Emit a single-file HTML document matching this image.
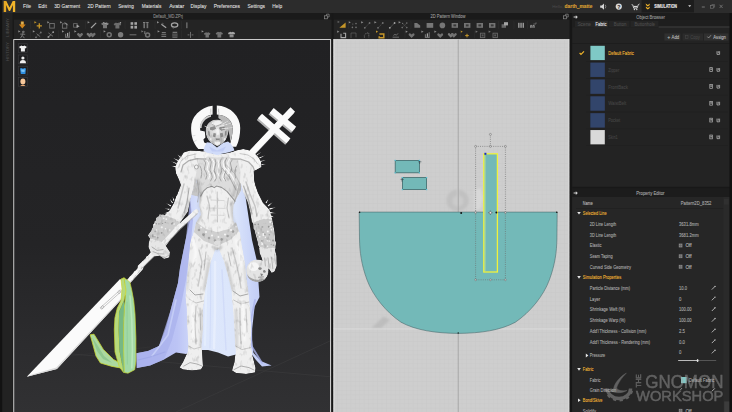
<!DOCTYPE html>
<html lang="en"><head><meta charset="utf-8"><title>Marvelous Designer - Default_MD.ZPrj</title>
<style>
html,body{margin:0;padding:0;background:#1b1b1b;overflow:hidden}
body{width:732px;height:412px;position:relative;font-family:'Liberation Sans','DejaVu Sans',sans-serif}
svg{position:absolute;left:0;top:0;display:block}
svg text{font-family:'Liberation Sans','DejaVu Sans',sans-serif;white-space:pre}
</style></head><body>
<svg width="732" height="412" viewBox="0 0 732 412">
<rect x="0" y="0" width="732" height="412" fill="#1b1b1b" />
<rect x="0" y="0" width="732" height="13" fill="#2c2c2c" />
<rect x="0" y="13" width="13.5" height="399" fill="#222222" />
<rect x="0" y="0" width="2.2" height="412" fill="#121212" />
<rect x="12.6" y="13" width="1" height="399" fill="#181818" />
<rect x="14" y="13" width="558" height="6.6" fill="#1a1a1a" />
<rect x="14" y="19.6" width="318" height="19.4" fill="#242424" />
<rect x="333.5" y="19.6" width="236.5" height="19.4" fill="#242424" />
<rect x="331.5" y="13" width="2" height="399" fill="#181818" />
<path d="M3.8 12 L3.8 0.9 L6.3 0.9 L9.5 7.4 L12.7 0.9 L15.2 0.9 L15.2 12 L12.9 12 L12.9 5 L10.1 10.9 L8.9 10.9 L6.1 5 L6.1 12 Z" fill="#f2b52a"/>
<path d="M3.8 12 L3.8 0.9 L6.1 0.9 L6.1 12Z" fill="#d99a1c" opacity=".5"/>
<text x="23" y="7.9" font-size="5.5" fill="#dedede" font-weight="normal" text-anchor="start" textLength="8.2" lengthAdjust="spacingAndGlyphs" stroke="#dedede" stroke-width=".12">File</text>
<text x="38.2" y="7.9" font-size="5.5" fill="#dedede" font-weight="normal" text-anchor="start" textLength="8.6" lengthAdjust="spacingAndGlyphs" stroke="#dedede" stroke-width=".12">Edit</text>
<text x="54.2" y="7.9" font-size="5.5" fill="#dedede" font-weight="normal" text-anchor="start" textLength="25.8" lengthAdjust="spacingAndGlyphs" stroke="#dedede" stroke-width=".12">3D Garment</text>
<text x="87.5" y="7.9" font-size="5.5" fill="#dedede" font-weight="normal" text-anchor="start" textLength="23.3" lengthAdjust="spacingAndGlyphs" stroke="#dedede" stroke-width=".12">2D Pattern</text>
<text x="118.2" y="7.9" font-size="5.5" fill="#dedede" font-weight="normal" text-anchor="start" textLength="15.6" lengthAdjust="spacingAndGlyphs" stroke="#dedede" stroke-width=".12">Sewing</text>
<text x="141.8" y="7.9" font-size="5.5" fill="#dedede" font-weight="normal" text-anchor="start" textLength="19.5" lengthAdjust="spacingAndGlyphs" stroke="#dedede" stroke-width=".12">Materials</text>
<text x="169.2" y="7.9" font-size="5.5" fill="#dedede" font-weight="normal" text-anchor="start" textLength="15.0" lengthAdjust="spacingAndGlyphs" stroke="#dedede" stroke-width=".12">Avatar</text>
<text x="190.5" y="7.9" font-size="5.5" fill="#dedede" font-weight="normal" text-anchor="start" textLength="15.8" lengthAdjust="spacingAndGlyphs" stroke="#dedede" stroke-width=".12">Display</text>
<text x="213.7" y="7.9" font-size="5.5" fill="#dedede" font-weight="normal" text-anchor="start" textLength="26.3" lengthAdjust="spacingAndGlyphs" stroke="#dedede" stroke-width=".12">Preferences</text>
<text x="247.5" y="7.9" font-size="5.5" fill="#dedede" font-weight="normal" text-anchor="start" textLength="17.5" lengthAdjust="spacingAndGlyphs" stroke="#dedede" stroke-width=".12">Settings</text>
<text x="272.3" y="7.9" font-size="5.5" fill="#dedede" font-weight="normal" text-anchor="start" textLength="10.0" lengthAdjust="spacingAndGlyphs" stroke="#dedede" stroke-width=".12">Help</text>
<text transform="translate(8.6,37) rotate(-90)" font-size="4.2" fill="#4e4e4e" textLength="19" lengthAdjust="spacingAndGlyphs">LIBRARY</text>
<text transform="translate(8.6,61) rotate(-90)" font-size="4.2" fill="#4e4e4e" textLength="19" lengthAdjust="spacingAndGlyphs">HISTORY</text>
<text x="153.2" y="18.4" font-size="5.2" fill="#8c8c8c" font-weight="normal" text-anchor="start" textLength="29.8" lengthAdjust="spacingAndGlyphs"  stroke="#8c8c8c" stroke-width=".1">Default_MD.ZPrj</text>
<text x="430.5" y="18.4" font-size="5.2" fill="#9a9a9a" font-weight="normal" text-anchor="start" textLength="35" lengthAdjust="spacingAndGlyphs"  stroke="#9a9a9a" stroke-width=".1">2D Pattern Window</text>
<g fill="none" stroke="#8a8a8a" stroke-width=".7"><rect x="324.5" y="15.799999999999999" width="3" height="3"/><path d="M326.5 15.799999999999999 V14.2 H329.09999999999997 V17.0 H327.5"/></g>
<g fill="none" stroke="#8a8a8a" stroke-width=".7"><rect x="563.5999999999999" y="15.799999999999999" width="3" height="3"/><path d="M565.5999999999999 15.799999999999999 V14.2 H568.1999999999999 V17.0 H566.5999999999999"/></g>
<g fill="none" stroke="#8a8a8a" stroke-width=".7"><rect x="723.4" y="16.0" width="3" height="3"/><path d="M725.4 16.0 V14.400000000000002 H728.0 V17.200000000000003 H726.4"/></g>
<g fill="none" stroke="#8a8a8a" stroke-width=".7"><rect x="723.4" y="192.0" width="3" height="3"/><path d="M725.4 192.0 V190.4 H728.0 V193.2 H726.4"/></g>
<g filter="url(#soft3)" opacity=".82">
<path d="M20.8 21.4 h3 v3.2 h1.9 l-3.4 4 l-3.4 -4 h1.9z" fill="#f59a1a"/><path d="M21.2 21.8 h2.2 v2.4 h-2.2z" fill="#ffd46a"/>
<path d="M34.4 21.2 l2.2 1.1 l-2.2 1.1z" fill="#eab02a"/>
<path d="M36.699999999999996 25.8H41.9M39.3 23.2V28.400000000000002" stroke="#eab02a" stroke-width="1.3" fill="none"/>
<path d="M47.3 21.2 l2.2 1.1 l-2.2 1.1z" fill="#a8a8a8"/>
<rect x="49.7" y="23.5" width="4.6" height="4.6" fill="none" stroke="#838383" stroke-width=".9"/>
<path d="M60.099999999999994 21.2 l2.2 1.1 l-2.2 1.1z" fill="#a8a8a8"/>
<rect x="62.39999999999999" y="23.8" width="4.4" height="4.4" fill="none" stroke="#838383" stroke-width=".9"/>
<path d="M64.8 22.400000000000002L67.60000000000001 25.2" stroke="#c2c2c2" stroke-width="0.9" fill="none"/>
<rect x="73.60000000000001" y="23.599999999999998" width="3.6" height="3.6" fill="none" stroke="#777" stroke-width=".9"/>
<path d="M76.6 24.599999999999998 l3 1.6 l-3 1.8z" fill="#c2c2c2"/>
<path d="M87.6 21.2 l2.2 1.1 l-2.2 1.1z" fill="#a8a8a8"/>
<path d="M91.0 28.0L96.19999999999999 22.799999999999997" stroke="#c2c2c2" stroke-width="1.1" fill="none"/>
<path transform="translate(105,25.2) scale(1.0)" d="M-1.4 -3 L-3.8 -1.6 L-3 0 L-2 -0.5 L-2 3 L2 3 L2 -0.5 L3 0 L3.8 -1.6 L1.4 -3 Q0 -2 -1.4 -3Z" fill="#8a8a8a"/>
<path d="M103 22.599999999999998 l4.6 1.6" stroke="#c2c2c2" stroke-width=".9"/>
<path transform="translate(117.4,25.5) scale(1.0)" d="M-1.4 -3 L-3.8 -1.6 L-3 0 L-2 -0.5 L-2 3 L2 3 L2 -0.5 L3 0 L3.8 -1.6 L1.4 -3 Q0 -2 -1.4 -3Z" fill="#7c7c7c"/>
<circle cx="120.4" cy="22.8" r=".8" fill="#c2c2c2"/>
<g fill="#c2c2c2"><rect x="130.6" y="22.2" width="2.6" height="2.6"/><rect x="134.4" y="22.2" width="2.6" height="2.6"/><rect x="130.6" y="25.8" width="2.6" height="2.8"/><rect x="134.4" y="25.8" width="2.6" height="2.8"/></g>
<g fill="#838383"><rect x="143.4" y="23.2" width="1.6" height="5"/><rect x="146.6" y="23.2" width="1.6" height="5"/></g><path d="M143 22.599999999999998h2.4M146.2 22.599999999999998h2.4" stroke="#c2c2c2" stroke-width=".8"/>
<path d="M157 21.2 l2.2 1.1 l-2.2 1.1z" fill="#a8a8a8"/>
<path d="M161.4 24.2L166.20000000000002 27.8" stroke="#c2c2c2" stroke-width="1.1" fill="none"/>
<path d="M161.6 23.8 q1 -1 2 0" stroke="#838383" fill="none" stroke-width=".8"/>
<ellipse cx="174.6" cy="25.0" rx="3.2" ry="2.1" fill="none" stroke="#c2c2c2" stroke-width="1.2"/><path d="M172 27.2l1.4 1.4" stroke="#838383" stroke-width=".9"/>
<rect x="186.2" y="22.4" width="1.3" height="5.8" fill="#838383"/>
<path d="M18.3 30.299999999999997 l2.2 1.1 l-2.2 1.1z" fill="#a8a8a8"/>
<g stroke="#838383" stroke-width="1" fill="none" stroke-linecap="round"><circle cx="23.200000000000003" cy="31.899999999999995" r=".8" fill="#838383"/><path d="M23.0 33.099999999999994 L22.200000000000003 35.49999999999999 L20.6 37.9 M22.200000000000003 35.49999999999999 L24.200000000000003 37.9 M20.6 34.099999999999994 L24.8 34.3"/></g>
<path d="M32.8 30.299999999999997 l2.2 1.1 l-2.2 1.1z" fill="#a8a8a8"/>
<g fill="#838383"><circle cx="36.0" cy="37.3" r=".9"/><circle cx="40.8" cy="32.5" r=".9"/></g><path d="M36.0 37.3L40.8 32.5" stroke="#838383" stroke-width=".7" stroke-dasharray="1 .8"/>
<path d="M36.6 33.699999999999996l3.6 3" stroke="#838383" stroke-width=".9"/>
<g fill="#c2c2c2"><circle cx="48.4" cy="36.9" r=".9"/><circle cx="53.199999999999996" cy="32.1" r=".9"/></g><path d="M48.4 36.9L53.199999999999996 32.1" stroke="#c2c2c2" stroke-width=".7" stroke-dasharray="1 .8"/>
<path d="M48.4 32.9l4.6 3.4M48.6 36.699999999999996l2.4-2" stroke="#838383" stroke-width=".9"/>
<path d="M62 30.299999999999997 l2.2 1.1 l-2.2 1.1z" fill="#a8a8a8"/>
<path d="M65.6 33.699999999999996 v3.4 h3.8 v-5.4" stroke="#838383" stroke-width="1.1" fill="none"/><rect x="67" y="32.9" width="1.2" height="3.6" fill="#c2c2c2"/>
<path d="M74.4 30.299999999999997 l2.2 1.1 l-2.2 1.1z" fill="#a8a8a8"/>
<path d="M80 37.699999999999996 L77 34.699999999999996 Q77 32.49999999999999 78.8 33.099999999999994 L80 34.3 L81.2 33.099999999999994 Q83 32.49999999999999 83 34.699999999999996Z" fill="#838383"/>
<path d="M89.6 37.5 L86.6 34.5 Q86.6 32.3 88.39999999999999 32.9 L89.6 34.1 L90.8 32.9 Q92.6 32.3 92.6 34.5Z" fill="#8c8c8c"/>
<path d="M92.6 37.5 L89.6 34.5 Q89.6 32.3 91.39999999999999 32.9 L92.6 34.1 L93.8 32.9 Q95.6 32.3 95.6 34.5Z" fill="#838383"/>
<path d="M103.6 30.299999999999997 l2.2 1.1 l-2.2 1.1z" fill="#a8a8a8"/>
<circle cx="109.2" cy="34.8" r="2" fill="none" stroke="#838383" stroke-width="1.5"/>
<circle cx="120.6" cy="34.699999999999996" r="2.7" fill="#8e8e8e"/>
<path d="M129.6 34.8h6.8" stroke="#838383" stroke-width="1"/>
<path d="M141.4 30.299999999999997 l2.2 1.1 l-2.2 1.1z" fill="#888"/>
<circle cx="147.6" cy="35.099999999999994" r="2" fill="none" stroke="#838383" stroke-width="1.5"/>
<rect x="144.2" y="31.099999999999998" width="1.2" height="3" fill="#838383"/>
<path d="M157.6 30.299999999999997 l2.2 1.1 l-2.2 1.1z" fill="#a8a8a8"/>
<path d="M161.4 34.699999999999996h4.8M161.4 36.5h4.8" stroke="#838383" stroke-width="1"/><path d="M161.8 32.699999999999996h4" stroke="#c2c2c2" stroke-width=".8"/>
<path d="M172.2 34.099999999999994h5.4M172.2 35.9h5.4M172.4 37.3h5" stroke="#838383" stroke-width=".9"/><path d="M172.6 32.3h4.6" stroke="#c2c2c2" stroke-width=".8"/>
<path d="M187.6 34.9h1.8M191.6 34.9h1.8M190.5 31.9v6" stroke="#838383" stroke-width=".9"/>
<path d="M201.6 30.299999999999997 l2.2 1.1 l-2.2 1.1z" fill="#a8a8a8"/>
<path transform="translate(207.2,34.9) scale(0.85)" d="M-1.4 -3 L-3.8 -1.6 L-3 0 L-2 -0.5 L-2 3 L2 3 L2 -0.5 L3 0 L3.8 -1.6 L1.4 -3 Q0 -2 -1.4 -3Z" fill="#838383"/>
<path transform="translate(219.3,34.699999999999996) scale(0.95)" d="M-1.4 -3 L-3.8 -1.6 L-3 0 L-2 -0.5 L-2 3 L2 3 L2 -0.5 L3 0 L3.8 -1.6 L1.4 -3 Q0 -2 -1.4 -3Z" fill="#838383"/>
<path transform="translate(231.6,34.5) scale(0.95)" d="M-1.4 -3 L-3.8 -1.6 L-3 0 L-2 -0.5 L-2 3 L2 3 L2 -0.5 L3 0 L3.8 -1.6 L1.4 -3 Q0 -2 -1.4 -3Z" fill="#c2c2c2"/>
<path d="M229.2 34.5h4.8M229.6 36.099999999999994h4" stroke="#555" stroke-width=".6"/>
<rect x="30.2" y="21.2" width="0.6" height="7.6" fill="#333" />
<rect x="85" y="21.2" width="0.6" height="7.6" fill="#333" />
<rect x="124.8" y="21.2" width="0.6" height="7.6" fill="#333" />
<rect x="154.8" y="21.2" width="0.6" height="7.6" fill="#333" />
<rect x="181.4" y="21.2" width="0.6" height="7.6" fill="#333" />
<rect x="30.2" y="30.4" width="0.6" height="7.6" fill="#333" />
<rect x="58" y="30.4" width="0.6" height="7.6" fill="#333" />
<rect x="100" y="30.4" width="0.6" height="7.6" fill="#333" />
<rect x="154.8" y="30.4" width="0.6" height="7.6" fill="#333" />
<rect x="181.4" y="30.4" width="0.6" height="7.6" fill="#333" />
<rect x="198.6" y="30.4" width="0.6" height="7.6" fill="#333" />
<path d="M339.4 27.8 L345.6 27.8 L345.6 22.4Z" fill="#eab02a"/>
<path d="M337.6 20.8 l2.2 1.1 l-2.2 1.1z" fill="#777"/>
<path d="M348.6 21.2 l2.2 1.1 l-2.2 1.1z" fill="#a8a8a8"/>
<g fill="#838383"><circle cx="352.4" cy="27.4" r=".8"/><circle cx="356" cy="27.4" r=".8"/><circle cx="356" cy="23.599999999999998" r=".8"/><circle cx="352.8" cy="24.0" r=".6"/></g>
<path d="M361.2 21.2 l2.2 1.1 l-2.2 1.1z" fill="#a8a8a8"/>
<g fill="#838383"><circle cx="364.8" cy="27.799999999999997" r=".9"/><circle cx="369.59999999999997" cy="23.0" r=".9"/></g><path d="M364.8 27.799999999999997L369.59999999999997 23.0" stroke="#838383" stroke-width=".7" stroke-dasharray="1 .8"/>
<path d="M374.4 21.2 l2.2 1.1 l-2.2 1.1z" fill="#a8a8a8"/>
<g fill="#838383"><circle cx="378.0" cy="27.799999999999997" r=".9"/><circle cx="382.79999999999995" cy="23.0" r=".9"/></g><path d="M378.0 27.799999999999997L382.79999999999995 23.0" stroke="#838383" stroke-width=".7" stroke-dasharray="1 .8"/>
<g fill="#c2c2c2"><circle cx="389.8" cy="27.799999999999997" r=".9"/><circle cx="394.59999999999997" cy="23.0" r=".9"/></g><path d="M389.8 27.799999999999997L394.59999999999997 23.0" stroke="#c2c2c2" stroke-width=".7" stroke-dasharray="1 .8"/>
<path d="M398.6 21.2 l2.2 1.1 l-2.2 1.1z" fill="#a8a8a8"/>
<g fill="#838383"><circle cx="402.2" cy="27.599999999999998" r=".8"/><circle cx="406.8" cy="27.599999999999998" r=".8"/><circle cx="406.8" cy="23.0" r=".8"/><circle cx="402.6" cy="23.4" r=".6"/></g><path d="M402.4 23.2l4.2 4.2M406.6 23.2l-4.2 4.2" stroke="#838383" stroke-width=".6" stroke-dasharray="1 .7"/>
<path d="M414.4 27.8 v-4.8 h2.6 l3.2 2.4 v2.4z" fill="#8a8a8a"/>
<rect x="426.6" y="23.0" width="6.6" height="4.8" fill="#8a8a8a"/>
<circle cx="442.4" cy="25.4" r="2.8" fill="#8a8a8a"/>
<rect x="451.6" y="23.0" width="6.4" height="4.8" fill="#868686"/><rect x="453.40000000000003" y="24.4" width="2.8" height="2" fill="#3c3c3c"/>
<rect x="464.0" y="23.0" width="6.4" height="4.8" fill="#868686"/><rect x="465.8" y="24.4" width="2.8" height="2" fill="#3c3c3c"/>
<rect x="476.6" y="23.0" width="6.4" height="4.8" fill="#868686"/><rect x="478.40000000000003" y="24.4" width="2.8" height="2" fill="#3c3c3c"/>
<rect x="489.0" y="23.0" width="6.4" height="4.8" fill="#868686"/><rect x="490.8" y="24.4" width="2.8" height="2" fill="#3c3c3c"/>
<rect x="501.6" y="24.2" width="4.4" height="3.6" fill="#777"/><rect x="504" y="22.2" width="4" height="3.2" fill="#c2c2c2"/>
<g fill="#c2c2c2"><rect x="518.2" y="22.8" width="1.3" height="5"/><rect x="520.4" y="22.8" width="1.3" height="5"/><rect x="522.6" y="22.8" width="1.3" height="5"/></g>
<path d="M530.6 27.8v-2.4h1.2v2.4M533 27.8v-2.4h1.2v2.4" stroke="#c2c2c2" stroke-width=".8" fill="none"/><path d="M533.4 24.0h2.6v-1.6" stroke="#838383" stroke-width=".8" fill="none"/>
<path d="M337.2 30.6 l2.2 1.1 l-2.2 1.1z" fill="#a8a8a8"/>
<path d="M341 33.800000000000004v3.8h4.6v-4.4h-2.4" stroke="#c2c2c2" stroke-width="1.1" fill="none"/>
<path d="M351 37.6v-4.6h5v4.6" stroke="#838383" stroke-width=".9" fill="none" stroke-dasharray="1.2 .8"/>
<path d="M364.4 37.6v-2.4l2-2.2h2.4v4.6" stroke="#838383" stroke-width=".9" fill="none" stroke-dasharray="1.2 .8"/>
<path d="M376 30.6 l2.2 1.1 l-2.2 1.1z" fill="#eab02a"/>
<path d="M379.4 34.0h4.4v3.8h-4.6v-1.6" stroke="#eab02a" stroke-width="1.5" fill="none"/>
<path d="M392.6 37.2h6.4M393.4 35.4l1.6-1l1.4 .8l1.6-1.8" stroke="#838383" stroke-width=".9" fill="none"/>
<path d="M405.6 30.6 l2.2 1.1 l-2.2 1.1z" fill="#a8a8a8"/>
<path d="M411.6 38.0 L408.6 35.0 Q408.6 32.8 410.40000000000003 33.4 L411.6 34.6 L412.8 33.4 Q414.6 32.8 414.6 35.0Z" fill="#838383"/>
<path d="M421.4 30.6 l2.2 1.1 l-2.2 1.1z" fill="#a8a8a8"/>
<path d="M425.4 34.2 v3.2 h3.8 v-5.2" stroke="#838383" stroke-width="1.1" fill="none"/><rect x="426.8" y="33.4" width="1.2" height="3.4" fill="#c2c2c2"/>
<path d="M434.4 30.6 l2.2 1.1 l-2.2 1.1z" fill="#a8a8a8"/>
<path d="M440.2 38.0 L437.2 35.0 Q437.2 32.8 439.0 33.4 L440.2 34.6 L441.4 33.4 Q443.2 32.8 443.2 35.0Z" fill="#838383"/>
<path d="M450.8 37.800000000000004 L447.8 34.800000000000004 Q447.8 32.6 449.6 33.2 L450.8 34.400000000000006 L452.0 33.2 Q453.8 32.6 453.8 34.800000000000004Z" fill="#8c8c8c"/>
<path d="M453.8 37.800000000000004 L450.8 34.800000000000004 Q450.8 32.6 452.6 33.2 L453.8 34.400000000000006 L455.0 33.2 Q456.8 32.6 456.8 34.800000000000004Z" fill="#838383"/>
<path d="M460.6 30.6 l2.2 1.1 l-2.2 1.1z" fill="#eab02a"/>
<path d="M465.2 35.6H468.8M467 33.800000000000004V37.4" stroke="#eab02a" stroke-width="1" fill="none"/>
<path d="M475.6 30.6 l2.2 1.1 l-2.2 1.1z" fill="#888"/>
<rect x="480.40000000000003" y="33.199999999999996" width="4.4" height="4.4" fill="none" stroke="#777" stroke-width=".9"/>
<rect x="481.6" y="34.4" width="2" height="2" fill="#666"/>
<path d="M488.6 30.6 l2.2 1.1 l-2.2 1.1z" fill="#888"/>
<rect x="493.0" y="33.199999999999996" width="4.4" height="4.4" fill="none" stroke="#777" stroke-width=".9"/>
<rect x="494.2" y="34.4" width="2" height="2" fill="#666"/>
<rect x="348" y="21.2" width="0.6" height="7.6" fill="#333" />
<rect x="410.6" y="21.2" width="0.6" height="7.6" fill="#333" />
<rect x="498" y="21.2" width="0.6" height="7.6" fill="#333" />
<rect x="513.6" y="21.2" width="0.6" height="7.6" fill="#333" />
<rect x="527" y="21.2" width="0.6" height="7.6" fill="#333" />
<rect x="388" y="30.6" width="0.6" height="7.6" fill="#333" />
<rect x="404.6" y="30.6" width="0.6" height="7.6" fill="#333" />
<rect x="460.4" y="30.6" width="0.6" height="7.6" fill="#333" />
<rect x="474" y="30.6" width="0.6" height="7.6" fill="#333" />
</g>
<defs><clipPath id="c3d"><rect x="14.2" y="40" width="315.9" height="372"/></clipPath><linearGradient id="bg3d" x1="0" y1="0" x2="0" y2="1"><stop offset="0" stop-color="#212123"/><stop offset=".55" stop-color="#242426"/><stop offset=".82" stop-color="#2c2c2e"/><stop offset="1" stop-color="#313133"/></linearGradient><linearGradient id="floor" x1="0" y1="0" x2="0" y2="1"><stop offset="0" stop-color="#2a2a2c" stop-opacity="0"/><stop offset=".5" stop-color="#2a2a2c" stop-opacity=".9"/><stop offset="1" stop-color="#29292b" stop-opacity="1"/></linearGradient><linearGradient id="cape" x1="0" y1="0" x2="1" y2="0"><stop offset="0" stop-color="#aeb4f0"/><stop offset=".3" stop-color="#bcc4f5"/><stop offset=".5" stop-color="#dde7fc"/><stop offset=".72" stop-color="#dce6fb"/><stop offset=".86" stop-color="#c8d3f7"/><stop offset="1" stop-color="#b9c4f2"/></linearGradient><linearGradient id="skin" x1="0" y1="0" x2="1" y2="1"><stop offset="0" stop-color="#f4f4f4"/><stop offset="1" stop-color="#d4d4d4"/></linearGradient><radialGradient id="headg" cx=".45" cy=".4" r=".7"><stop offset="0" stop-color="#ececec"/><stop offset="1" stop-color="#a9a9a9"/></radialGradient><filter id="soft" x="-5%" y="-5%" width="110%" height="110%"><feGaussianBlur stdDeviation=".45"/></filter><filter id="sculpt" x="-5%" y="-5%" width="110%" height="110%" color-interpolation-filters="sRGB"><feTurbulence type="fractalNoise" baseFrequency="0.3 0.16" numOctaves="2" seed="7" result="n"/><feColorMatrix in="n" type="matrix" values="0.44 0 0 0 0.8  0.44 0 0 0 0.8  0.44 0 0 0 0.8  0 0 0 0 1" result="g"/><feComposite in="SourceGraphic" in2="g" operator="arithmetic" k1="1" k2="0" k3="0" k4="0" result="m"/><feComposite in="m" in2="SourceAlpha" operator="in" result="c"/><feGaussianBlur in="c" stdDeviation=".4"/></filter><filter id="soft3" x="-2%" y="-20%" width="104%" height="140%"><feGaussianBlur stdDeviation=".35"/></filter><filter id="soft2" x="-5%" y="-5%" width="110%" height="110%"><feGaussianBlur stdDeviation=".9"/></filter></defs>
<rect x="13.3" y="39.1" width="317.8" height="372.9" fill="#dedede" />
<rect x="14.2" y="40" width="315.9" height="372" fill="url(#bg3d)" />
<g clip-path="url(#c3d)">
<g stroke="#3c3c3e" stroke-width=".6" fill="none"><path d="M55 352.5 L331 376.8"/><path d="M176 412 L331 340.5"/><path d="M62 357 L150 347" opacity=".5"/></g>
<g filter="url(#soft)">
<g stroke-linecap="butt" fill="none"><g stroke="#b4b4b4" stroke-width="6.4" transform="translate(-1.1,1.5)"><path d="M252 152.6 L292.8 109.5"/><path d="M260 116 L288.4 140.8"/><path d="M271.7 110.5 L294.2 129.1"/></g><g stroke="#fbfbfb" stroke-width="6.2"><path d="M250 154.6 L292.8 109.5"/><path d="M260 116 L288.4 140.8"/><path d="M271.7 110.5 L294.2 129.1"/></g></g>
<path d="M212.6 105.8 A24.5 22.2 0 0 0 191.1 128 C191.1 136 193 143 198.4 148.9 L207 148.9 L206.8 143.4 L204.2 142.6 L203.4 139.4 L205.4 137.4 L204.8 131.6 L200.2 130.4 C199.4 122 205 115.2 212.6 114.6Z" fill="#f9f9f9"/>
<path d="M216.8 105.6 A24.5 22.2 0 0 1 240.2 128 C240.2 135 239 141 236.2 146.8 L229 146.8 C231.4 141 232.6 135 232.6 128 C232.6 120.6 226 115 216.8 114.6Z" fill="#f9f9f9"/>
<path d="M218.4 114.7 C226 115.2 232.6 120.6 232.6 128 C232.6 133 231.8 138 230.4 142 C229.6 134 228.6 124.6 218.4 118Z" fill="#b9b9b9"/>
<path d="M199.8 128 C199.8 121.4 204 116.2 211 114.9 L211 116.8 C205.4 118.4 201.6 122.6 201.6 128Z" fill="#cfcfcf"/>
<g stroke="#9a9a9a" stroke-width=".5"><path d="M210.8 108.6v3.4M218.6 108.6v3.4M211.4 113h-1.6M219.6 113h-1.6"/></g>
<path d="M192.4 136 l3 -.6 M194 141.6 l2.6 -1.4" stroke="#c8c8c8" stroke-width=".6"/>
<path d="M202 154 L193 172 L190 200 L191 216 L186 238 L180 268 L178 283 L172 305 L166 328 L159 346 L148 351 L136.4 353.2 L136.8 368 L150 365.4 L164 359.6 L176 352.6 L186 354 L196 350 L208 350 L218 352.4 L228 356.4 L238 354 L250 352 L256 360 L262 366.4 L271.6 365.4 L260.7 361 L253.4 352.8 L252 340 L252.2 328.5 L254.6 306.7 L259.5 297 L258.3 280 L259 270 L252 240 L246 200 L242 172 L236 154Z" fill="url(#cape)" />
<path d="M190 200 L186 238 L180 268 L178 283 L170 312 L159 346 L148 351 L136.4 353.2 L136.8 368 L150 365.4 L164 359.6 L172 340 L180 310 L186 280 L190 250 L193 220Z" fill="#aab2ec" opacity=".75"/>
<path d="M207 262 L206 300 L205 345" fill="none" stroke="#eaf1fe" stroke-width="2" stroke-linecap="round" stroke-linejoin="round" opacity=".6"/>
<path d="M215 262 L215 310 L214 348" fill="none" stroke="#eef4fe" stroke-width="2.4" stroke-linecap="round" stroke-linejoin="round" opacity=".6"/>
<path d="M222 270 L224 310 L226 350" fill="none" stroke="#c9d4f6" stroke-width="1.4" stroke-linecap="round" stroke-linejoin="round" opacity=".6"/>
<path d="M210.6 255 L210.6 300 L210 348" fill="none" stroke="#c6d1f5" stroke-width="1" stroke-linecap="round" stroke-linejoin="round" opacity=".5"/>
<path d="M255 300 L250.6 322 L251.6 346 L262 363" fill="none" stroke="#aab3ec" stroke-width="1.8" stroke-linecap="round" stroke-linejoin="round" opacity=".8"/>
<path d="M176 300 L168 335 L152 356" fill="none" stroke="#c9d2f8" stroke-width="1.6" stroke-linecap="round" stroke-linejoin="round" opacity=".8"/>
<path d="M138 360 L150 357 L165 352" fill="none" stroke="#9ea8e6" stroke-width="1.2" stroke-linecap="round" stroke-linejoin="round" opacity=".8"/>
<path d="M129 281 L141 268" fill="none" stroke="#f6f6f6" stroke-width="4.6" stroke-linecap="round" stroke-linejoin="round" />
<path d="M139 270 L152.7 252.6" fill="none" stroke="#eeeeee" stroke-width="3.5" stroke-linecap="round" stroke-linejoin="round" />
<path d="M127.6 285.8 L141 269.2 L153.6 253.4" fill="none" stroke="#b9b9b9" stroke-width="1" stroke-linecap="round" stroke-linejoin="round" opacity=".8"/>
<g fill="#fafafa"><circle cx="131.4" cy="278" r="2"/><circle cx="135.6" cy="273" r="2"/><circle cx="139.6" cy="268" r="2"/><circle cx="143.8" cy="263" r="2"/><circle cx="148" cy="258" r="2.1"/></g>
</g><g filter="url(#sculpt)">
<path d="M192 236 L214 240 L216 248 L211 262 L208 276 L205.4 290 L204.4 300 L203 310 L203 330 L201.6 345 L202.4 356 L203 366 L201 369.4 L192 370.4 L183 369.6 L179.6 367.4 L183 362 L187.6 352 L188.2 344 L187 325 L186.6 308 L185.4 298 L186 288 L187.6 270 L189 255 L190 244Z" fill="#efefef" />
<path d="M218 246 L226 238 L240 232 L242 246 L245 262 L246.8 280 L248.6 292 L249.6 302 L250.4 312 L251.4 330 L251 345 L252.6 356 L255.6 368 L255 372.4 L246 374 L236 373 L232 370.4 L234.4 362 L235.6 352 L235 344 L234 325 L233 310 L232 300 L231.4 290 L228 276 L224 262 L220 252Z" fill="#efefef" />
<path d="M190 290 L195 295 L203 294" fill="none" stroke="#a8a8a8" stroke-width="1" stroke-linecap="round" stroke-linejoin="round" />
<path d="M189 299 L196 303 L203.6 301" fill="none" stroke="#c4c4c4" stroke-width="1" stroke-linecap="round" stroke-linejoin="round" />
<path d="M196 306 L195 325 L196 344" fill="none" stroke="#c4c4c4" stroke-width="1.2" stroke-linecap="round" stroke-linejoin="round" />
<path d="M200 308 L200.6 330" fill="none" stroke="#bcbcbc" stroke-width="0.9" stroke-linecap="round" stroke-linejoin="round" />
<path d="M233 291 L240 296 L248 294" fill="none" stroke="#a8a8a8" stroke-width="1" stroke-linecap="round" stroke-linejoin="round" />
<path d="M233.6 300 L241 304 L249 302" fill="none" stroke="#c4c4c4" stroke-width="1" stroke-linecap="round" stroke-linejoin="round" />
<path d="M240 308 L240 326 L241 344" fill="none" stroke="#c4c4c4" stroke-width="1.2" stroke-linecap="round" stroke-linejoin="round" />
<path d="M246 309 L247 332" fill="none" stroke="#bcbcbc" stroke-width="0.9" stroke-linecap="round" stroke-linejoin="round" />
<path d="M188.6 346 L194 349 L201 347" fill="none" stroke="#c4c4c4" stroke-width="0.9" stroke-linecap="round" stroke-linejoin="round" />
<path d="M235.6 346 L242 349.6 L250.6 347.6" fill="none" stroke="#c4c4c4" stroke-width="0.9" stroke-linecap="round" stroke-linejoin="round" />
<path d="M184 366 L190 362.6 L197 364 L202 366" fill="none" stroke="#a8a8a8" stroke-width="0.9" stroke-linecap="round" stroke-linejoin="round" />
<path d="M234 369.6 L241 366 L249 367.6 L254 370" fill="none" stroke="#a8a8a8" stroke-width="0.9" stroke-linecap="round" stroke-linejoin="round" />
<path d="M199 250 L202 262 L200 276 L198 286" fill="none" stroke="#c4c4c4" stroke-width="1.4" stroke-linecap="round" stroke-linejoin="round" opacity=".9"/>
<path d="M206 252 L204 270" fill="none" stroke="#b4b4b4" stroke-width="1" stroke-linecap="round" stroke-linejoin="round" opacity=".8"/>
<path d="M232 248 L236 262 L239 276 L241 288" fill="none" stroke="#c4c4c4" stroke-width="1.4" stroke-linecap="round" stroke-linejoin="round" opacity=".9"/>
<path d="M228 252 L231 266" fill="none" stroke="#b4b4b4" stroke-width="1" stroke-linecap="round" stroke-linejoin="round" opacity=".8"/>
<path d="M182 171 L176.3 174 L179 180 L180.8 185 L178 192.6 L174 202.7 L169.7 210.3 L161.5 218 L154 228 L150 238 L148.7 243 L153 246 L160 247 L166 246 L170 240 L175 231 L179.8 223 L181.7 220.4 L188 211.6 L190.5 199 L194.3 186.3 L197 176Z" fill="#efefef" />
<path d="M184 184 L181 196 L178 208" fill="none" stroke="#c4c4c4" stroke-width="1.4" stroke-linecap="round" stroke-linejoin="round" />
<path d="M189 188 L187 202 L184 213" fill="none" stroke="#b4b4b4" stroke-width="1.2" stroke-linecap="round" stroke-linejoin="round" />
<path d="M177 196 L174 206" fill="none" stroke="#f8f8f8" stroke-width="1.2" stroke-linecap="round" stroke-linejoin="round" />
<path d="M173.3 202.5 L169.5 198.6 L171.9 203.5Z" fill="#ececec" />
<path d="M171.4 205.2 L165.8 203.0 L170.6 206.8Z" fill="#ececec" />
<path d="M169.8 208.5 L164.1 208.4 L169.4 210.3Z" fill="#ececec" />
<path d="M174.8 200.3 L172.4 196.3 L173.2 200.9Z" fill="#ececec" />
<path d="M167.8 211.7 L163.7 213.4 L168.2 213.5Z" fill="#ececec" />
<path d="M159.5 214.0 L161.3 214.4 L163.3 214.3 L164.8 215.5 L166.6 215.9 L168.4 216.3 L170.0 217.5 L171.8 217.8 L173.6 218.4 L175.3 218.9 L176.4 220.8 L178.2 221.3 L179.6 222.1 L179.8 224.2 L178.8 225.5 L177.0 226.5 L177.5 228.7 L176.6 230.2 L175.3 231.4 L174.4 232.8 L172.9 233.9 L171.7 235.2 L171.5 237.2 L169.8 238.2 L169.0 239.7 L168.1 241.2 L166.9 242.4 L166.5 244.3 L165.1 245.8 L163.0 245.7 L161.3 244.4 L159.4 243.8 L157.7 242.8 L155.5 242.2 L154.3 240.7 L153.0 239.3 L150.8 239.1 L149.4 238.0 L147.8 235.4 L148.8 233.7 L150.2 232.1 L151.2 230.4 L151.9 228.6 L153.0 226.9 L152.8 224.6 L154.2 223.3 L154.3 221.5 L155.9 220.3 L155.8 218.4 L156.8 216.9 L158.9 216.1Z" fill="#cdcdcd" />
<circle cx="153.7" cy="235.9" r="0.8" fill="#fdfdfd" opacity=".8"/>
<circle cx="166.3" cy="219.1" r="0.9" fill="#fdfdfd" opacity=".8"/>
<circle cx="163.7" cy="218.4" r="0.8" fill="#f6f6f6" opacity=".8"/>
<circle cx="172.8" cy="223.0" r="0.7" fill="#8a8a8a" opacity=".8"/>
<circle cx="154.6" cy="224.4" r="0.8" fill="#fdfdfd" opacity=".8"/>
<circle cx="165.5" cy="228.8" r="0.7" fill="#fdfdfd" opacity=".8"/>
<circle cx="169.8" cy="230.0" r="0.8" fill="#f6f6f6" opacity=".8"/>
<circle cx="165.3" cy="222.4" r="0.7" fill="#949494" opacity=".8"/>
<circle cx="155.8" cy="236.2" r="0.7" fill="#f6f6f6" opacity=".8"/>
<circle cx="172.3" cy="236.2" r="0.9" fill="#8a8a8a" opacity=".8"/>
<circle cx="176.3" cy="227.1" r="0.7" fill="#949494" opacity=".8"/>
<circle cx="162.6" cy="223.5" r="0.6" fill="#8a8a8a" opacity=".8"/>
<circle cx="156.6" cy="229.9" r="0.6" fill="#fbfbfb" opacity=".8"/>
<circle cx="161.8" cy="227.3" r="1.1" fill="#f6f6f6" opacity=".8"/>
<circle cx="174.1" cy="224.0" r="0.8" fill="#fdfdfd" opacity=".8"/>
<circle cx="152.7" cy="235.3" r="1.0" fill="#9c9c9c" opacity=".8"/>
<circle cx="171.8" cy="223.7" r="0.9" fill="#949494" opacity=".8"/>
<circle cx="153.0" cy="236.6" r="1.0" fill="#949494" opacity=".8"/>
<circle cx="160.4" cy="216.0" r="0.7" fill="#949494" opacity=".8"/>
<circle cx="175.5" cy="227.5" r="1.0" fill="#fbfbfb" opacity=".8"/>
<circle cx="157.9" cy="237.8" r="0.8" fill="#949494" opacity=".8"/>
<circle cx="155.1" cy="231.4" r="0.6" fill="#9c9c9c" opacity=".8"/>
<circle cx="161.7" cy="232.8" r="0.9" fill="#8a8a8a" opacity=".8"/>
<circle cx="155.0" cy="236.7" r="0.7" fill="#8a8a8a" opacity=".8"/>
<circle cx="156.3" cy="223.8" r="0.7" fill="#8a8a8a" opacity=".8"/>
<circle cx="158.9" cy="223.8" r="0.9" fill="#9c9c9c" opacity=".8"/>
<path d="M140 266.8 L160 247.6 L178.8 227 L196.3 211.5" fill="none" stroke="#f2f2f2" stroke-width="4.7" stroke-linecap="round" stroke-linejoin="round" />
<path d="M141.8 268.4 L161.2 249.4 L180.2 229.4 L197.4 213.8" fill="none" stroke="#b0b0b0" stroke-width="1.2" stroke-linecap="round" stroke-linejoin="round" opacity=".7"/>
<path d="M148.7 243 L153 239.6 L160 241 L166 246 L170 252 L169.4 257.6 L164 259 L160 255.8 L155 256.6 L150.6 252.4 L148.4 247Z" fill="#e6e6e6" />
<path d="M152 247 L157 250.4 L163 249.6" fill="none" stroke="#a8a8a8" stroke-width="0.9" stroke-linecap="round" stroke-linejoin="round" />
<path d="M153 251.6 L158.6 253.8 L164 254" fill="none" stroke="#a8a8a8" stroke-width="0.8" stroke-linecap="round" stroke-linejoin="round" />
<path d="M160 256 L165 257.6 L169 255" fill="none" stroke="#b0b0b0" stroke-width="0.8" stroke-linecap="round" stroke-linejoin="round" />
<path d="M241 170 L239.7 177.6 L242.8 191.5 L247.9 202.8 L250.4 213 L251.7 221.8 L253.3 224 L256 236 L259 246.7 L262.5 253 L275 250 L275.6 245.8 L274.6 232 L272.2 219 L269.6 210 L268 207.9 L263 202.8 L258 192.7 L255.3 185 L254.2 180 L253.8 170Z" fill="#efefef" />
<path d="M246 182 L250 194 L255 206 L257 216" fill="none" stroke="#c4c4c4" stroke-width="1.4" stroke-linecap="round" stroke-linejoin="round" />
<path d="M243.6 186 L248.6 200 L252 214" fill="none" stroke="#b4b4b4" stroke-width="1.2" stroke-linecap="round" stroke-linejoin="round" />
<path d="M253 184 L258 196 L263 206" fill="none" stroke="#f8f8f8" stroke-width="1.2" stroke-linecap="round" stroke-linejoin="round" />
<path d="M268.6 206.7 L272.9 201.9 L267.4 205.3Z" fill="#ececec" />
<path d="M269.6 209.9 L276.2 207.2 L269.2 208.1Z" fill="#ececec" />
<path d="M269.9 213.5 L276.6 213.2 L270.1 211.7Z" fill="#ececec" />
<path d="M266.8 203.4 L268.5 198.7 L265.2 202.6Z" fill="#ececec" />
<path d="M270.3 216.8 L274.9 217.6 L270.9 215.2Z" fill="#ececec" />
<path d="M253.4 222.7 L255.1 222.2 L256.7 221.1 L258.5 220.8 L260.0 219.7 L262.0 219.5 L263.9 218.7 L265.9 219.2 L267.8 218.6 L269.7 219.3 L271.9 219.6 L272.2 221.5 L272.0 223.5 L273.3 225.2 L272.8 227.3 L273.1 229.2 L273.8 231.1 L273.8 233.0 L273.9 234.9 L274.8 236.6 L274.8 238.5 L274.5 240.4 L276.2 242.1 L276.1 243.9 L275.2 245.9 L275.7 248.9 L273.9 248.1 L272.1 247.8 L270.5 248.6 L268.7 248.2 L266.8 249.6 L264.7 249.3 L263.1 247.3 L260.9 247.6 L259.4 246.6 L257.8 245.1 L257.8 243.1 L257.9 241.2 L257.3 239.4 L256.8 237.6 L256.3 235.8 L255.6 234.0 L254.9 232.1 L254.7 230.2 L253.3 228.5 L253.3 226.5 L253.3 224.5Z" fill="#cbcbcb" />
<circle cx="264.8" cy="234.4" r="0.9" fill="#949494" opacity=".8"/>
<circle cx="257.5" cy="236.6" r="0.8" fill="#9c9c9c" opacity=".8"/>
<circle cx="271.3" cy="222.5" r="1.0" fill="#fdfdfd" opacity=".8"/>
<circle cx="271.4" cy="226.3" r="0.6" fill="#fbfbfb" opacity=".8"/>
<circle cx="259.6" cy="236.7" r="0.9" fill="#fbfbfb" opacity=".8"/>
<circle cx="267.8" cy="231.5" r="1.0" fill="#fbfbfb" opacity=".8"/>
<circle cx="262.3" cy="226.9" r="0.9" fill="#9c9c9c" opacity=".8"/>
<circle cx="271.3" cy="229.7" r="0.9" fill="#fbfbfb" opacity=".8"/>
<circle cx="258.3" cy="224.2" r="0.8" fill="#8a8a8a" opacity=".8"/>
<circle cx="271.2" cy="244.6" r="0.7" fill="#9c9c9c" opacity=".8"/>
<circle cx="258.3" cy="233.1" r="1.1" fill="#f6f6f6" opacity=".8"/>
<circle cx="263.3" cy="233.9" r="0.9" fill="#fdfdfd" opacity=".8"/>
<circle cx="273.6" cy="245.3" r="0.8" fill="#8a8a8a" opacity=".8"/>
<circle cx="269.9" cy="227.0" r="0.9" fill="#fdfdfd" opacity=".8"/>
<circle cx="269.3" cy="234.8" r="0.8" fill="#949494" opacity=".8"/>
<circle cx="255.0" cy="224.5" r="0.8" fill="#8a8a8a" opacity=".8"/>
<circle cx="268.8" cy="226.8" r="1.0" fill="#8a8a8a" opacity=".8"/>
<circle cx="271.8" cy="222.5" r="0.7" fill="#949494" opacity=".8"/>
<circle cx="269.5" cy="241.0" r="1.1" fill="#fdfdfd" opacity=".8"/>
<circle cx="261.6" cy="242.1" r="0.7" fill="#fdfdfd" opacity=".8"/>
<circle cx="256.5" cy="233.3" r="1.0" fill="#9c9c9c" opacity=".8"/>
<circle cx="261.9" cy="240.9" r="0.9" fill="#949494" opacity=".8"/>
<circle cx="267.7" cy="246.2" r="0.7" fill="#fdfdfd" opacity=".8"/>
<circle cx="270.3" cy="221.9" r="1.1" fill="#fdfdfd" opacity=".8"/>
<circle cx="263.0" cy="232.1" r="0.7" fill="#8a8a8a" opacity=".8"/>
<circle cx="263.4" cy="235.2" r="1.0" fill="#fbfbfb" opacity=".8"/>
<circle cx="265.4" cy="237.2" r="0.7" fill="#fdfdfd" opacity=".8"/>
<circle cx="273.1" cy="240.5" r="1.1" fill="#8a8a8a" opacity=".8"/>
<circle cx="262.2" cy="244.1" r="1.1" fill="#fbfbfb" opacity=".8"/>
<circle cx="267.4" cy="240.8" r="0.8" fill="#fdfdfd" opacity=".8"/>
<path d="M257.4 259.4 C264 259.4 268.6 264 268.6 270 C268.6 276.6 264.6 281.8 258 281.8 C251 281.8 246.2 277 246.2 270.4 C246.2 264 251 259.4 257.4 259.4Z" fill="#e4e4e4"/>
<path d="M247 275 C249.6 283 261 284.4 266.4 278 C261 281 252 280.4 247 275Z" fill="#a2a2a2"/>
<ellipse cx="253.6" cy="266.6" rx="5.2" ry="4.4" fill="#f7f7f7" opacity=".9"/>
<g fill="#868686"><ellipse cx="260" cy="268.6" rx="1.7" ry="1.4"/><ellipse cx="264.4" cy="271.4" rx="1.4" ry="1.3"/><path d="M260 273.6l1.6 2.6l1.6-2.2z"/></g>
<path d="M258 277.4l6-.6M259 279.4l4.4-.6" stroke="#8a8a8a" stroke-width=".6"/>
<path d="M259 247.4 L267 248.8 L274.7 248.4 L276.6 256 L276.8 266 L274.6 271.6 L271.7 273 L268.6 268.6 L266 271.6 L263.4 266.4 L262 259 L259.6 253Z" fill="#e6e6e6" />
<path d="M264.6 258 L265.4 266" fill="none" stroke="#a8a8a8" stroke-width="0.8" stroke-linecap="round" stroke-linejoin="round" />
<path d="M268 258 L269.2 268" fill="none" stroke="#a8a8a8" stroke-width="0.8" stroke-linecap="round" stroke-linejoin="round" />
<path d="M271.6 257.6 L272.8 268.6" fill="none" stroke="#a8a8a8" stroke-width="0.8" stroke-linecap="round" stroke-linejoin="round" />
<path d="M274.6 254 L275.6 264" fill="none" stroke="#bdbdbd" stroke-width="0.8" stroke-linecap="round" stroke-linejoin="round" />
<path d="M206 151 L200 151.6 L192 151 L186 151.8 L183.8 152.8 L181.6 156.5 L178 161 L175.5 166 L175.5 170 L176.3 174 L182 175 L188 176 L196 178 L199.3 192.6 L199.2 205 L201.2 214.6 L196.6 221.7 L194.5 228 L192 238 L204 246 L217 250 L230 244 L240 234 L237.4 228 L233 220 L232.3 215.3 L234.1 203.2 L238 196 L240.8 191 L241.4 186 L241 176 L248 174 L255.3 170 L261.3 167 L261 162 L258 157 L254 153 L248 150.4 L243.3 149.4 L238 150.6 L232 152 L217 155Z" fill="#efefef" />
<path d="M195 176 L199.3 192.6 L197.8 196.4 L193 195.6 L191.4 195 L193.4 188Z" fill="#c6c6c6" />
<path d="M239 180 L241.4 186 L240.8 191 L238 196 L235.6 199 L236 190Z" fill="#c2c2c2" />
<path d="M199 160 L208 156.4 L217 157.4 L228 156.4 L238 160 L240.6 172 L239.6 186 L237.6 196 L235.5 200.8 L232 196.4 L227 190.4 L221.6 186.4 L216.6 185 L214.2 186.6 L212 185.2 L207 186.8 L203.4 190.4 L200.8 195.3 L198 190 L195.6 176Z" fill="#dcdcdc" />
<g stroke="#9a9a9a" stroke-width=".9" fill="none" opacity=".9" stroke-linecap="round"><path d="M204 160q3 3 1 6q-2 3 1 6q2 3 0 7"/><path d="M209.6 158q3 4 1 8q-2 4 1 8q2 3 -1 7"/><path d="M215 159q2 4 0 8q-2 4 1 8q1 3 -1 6"/><path d="M221 159q-2 4 0 8q2 4 -1 8q-1 3 1 6"/><path d="M226.6 158q-3 4 -1 8q2 4 -1 8q-2 3 1 7"/><path d="M232 160q-3 3 -1 6q2 3 -1 6q-2 3 0 7"/><path d="M200 166q3 5 1 12"/><path d="M236.6 166q-3 5 -1 12"/></g>
<g stroke="#fcfcfc" stroke-width="1" fill="none" opacity=".95" stroke-linecap="round"><path d="M206.8 160q3 3 1 6q-2 3 1 6q2 3 0 7"/><path d="M212.4 159q3 4 1 8q-2 4 1 8q2 3 -1 6"/><path d="M218 160q2 4 0 8q-2 4 1 8"/><path d="M224 159q-2 4 0 8q2 4 -1 8q-1 3 1 5"/><path d="M229.4 159q-3 4 -1 8q2 4 -1 8"/></g>
<circle cx="196.4" cy="167" r="2" fill="none" stroke="#9c9c9c" stroke-width=".8"/><circle cx="196.4" cy="167" r=".8" fill="#f8f8f8"/>
<path d="M222 168 L230 178 L236 190" fill="none" stroke="#8f8f8f" stroke-width="1" stroke-linecap="round" stroke-linejoin="round" opacity=".7"/>
<path d="M223.6 166.4 L232 176 L238 188" fill="none" stroke="#f8f8f8" stroke-width="1.3" stroke-linecap="round" stroke-linejoin="round" />
<path d="M226 164.6 L235 174 L240 184" fill="none" stroke="#9a9a9a" stroke-width="0.7" stroke-linecap="round" stroke-linejoin="round" opacity=".7"/>
<path d="M200.8 196 L203.4 191.4 L207 188 L212 186.4 L214.2 187.8 L216.6 186.2 L221.6 187.6 L227 191.6 L232 197.6 L234.4 201 L232 204 L233.4 220 L217 224.4 L201.2 215.4 L199.2 205Z" fill="#f0f0f0" />
<path d="M200.8 196 L203.4 191.2 L207 187.8 L212 186.2 L214.2 187.6 L216.6 186 L221.6 187.4 L227 191.4 L232 197.4 L235.2 201.4" fill="none" stroke="#868686" stroke-width="1.1" stroke-linecap="round" stroke-linejoin="round" opacity=".85"/>
<path d="M217.2 192 L217.4 222" fill="none" stroke="#c4c4c4" stroke-width="1" stroke-linecap="round" stroke-linejoin="round" />
<path d="M207 196 L209.6 206 L208 218" fill="none" stroke="#c4c4c4" stroke-width="1.2" stroke-linecap="round" stroke-linejoin="round" />
<path d="M228.4 198 L227 208 L229 218" fill="none" stroke="#c4c4c4" stroke-width="1.2" stroke-linecap="round" stroke-linejoin="round" />
<path d="M211 200 L224 200.6" fill="none" stroke="#d0d0d0" stroke-width="0.8" stroke-linecap="round" stroke-linejoin="round" />
<path d="M210.4 208 L225 208.4" fill="none" stroke="#d0d0d0" stroke-width="0.8" stroke-linecap="round" stroke-linejoin="round" />
<path d="M211 215 L224 215.4" fill="none" stroke="#d4d4d4" stroke-width="0.8" stroke-linecap="round" stroke-linejoin="round" />
<path d="M197 180 L199 192 L197.6 202" fill="none" stroke="#9a9a9a" stroke-width="1.2" stroke-linecap="round" stroke-linejoin="round" opacity=".7"/>
<path d="M239.6 184 L236.6 196 L234 204" fill="none" stroke="#9a9a9a" stroke-width="1.2" stroke-linecap="round" stroke-linejoin="round" opacity=".6"/>
<path d="M196 222 L206 229 L217 232 L229 229 L236 222 L239 231 L230 240 L217 246 L204 241 L194 232Z" fill="#d0d0d0" />
<g fill="#979797" opacity=".8"><circle cx="199" cy="230" r="1.3"/><circle cx="203.6" cy="234.6" r="1.3"/><circle cx="209" cy="238" r="1.3"/><circle cx="215" cy="240.6" r="1.3"/><circle cx="221.6" cy="239.4" r="1.3"/><circle cx="227.6" cy="236" r="1.3"/><circle cx="233" cy="231.6" r="1.3"/></g>
<g fill="#f6f6f6"><circle cx="201" cy="227.6" r="1"/><circle cx="206" cy="232" r="1"/><circle cx="212" cy="235.6" r="1"/><circle cx="218.4" cy="237" r="1"/><circle cx="225" cy="234.6" r="1"/><circle cx="231" cy="230" r="1"/><circle cx="236" cy="226.6" r="1"/></g>
<ellipse cx="217.4" cy="228.6" rx="5.6" ry="3.2" fill="#f2f2f2"/>
<ellipse cx="217.6" cy="243" rx="3.6" ry="2.6" fill="#dedede"/>
<path d="M183.8 152.8 L190 150.6 L200 151 L209 154.4 L205 158.6 L197 158 L189 160 L183 165 L181 172 L176.3 174 L175.5 168 L178 161 L181.6 156.5Z" fill="#f4f4f4" />
<path d="M181 172 L183 165 L189 160.6 L197 158.6 L206 159" fill="none" stroke="#9c9c9c" stroke-width="1.2" stroke-linecap="round" stroke-linejoin="round" opacity=".8"/>
<path d="M178 168 L181 161 L187 156 L196 154" fill="none" stroke="#c2c2c2" stroke-width="0.9" stroke-linecap="round" stroke-linejoin="round" />
<path d="M243.3 149 L248 150 L254 153 L258 157 L261 162 L261.3 167 L255.3 170.6 L254 166 L249 161 L241 158.4 L231 158.4 L228.6 154 L236 150.4Z" fill="#f4f4f4" />
<path d="M231 158.8 L241 159.2 L248.6 162 L253 166.6 L254.6 171" fill="none" stroke="#9c9c9c" stroke-width="1.2" stroke-linecap="round" stroke-linejoin="round" opacity=".8"/>
<path d="M240 153.6 L248 155 L254 159 L257.6 164" fill="none" stroke="#c2c2c2" stroke-width="0.9" stroke-linecap="round" stroke-linejoin="round" />
<path d="M178.4 160.0 L172.5 157.4 L177.6 161.2Z" fill="#e8e8e8" />
<path d="M176.9 162.9 L170.3 161.1 L176.3 164.3Z" fill="#e8e8e8" />
<path d="M176.1 166.1 L170.1 165.8 L175.9 167.5Z" fill="#e8e8e8" />
<path d="M181.1 156.9 L177.1 153.9 L180.1 157.9Z" fill="#e8e8e8" />
<path d="M257.4 155.6 L261.9 151.6 L256.6 154.4Z" fill="#e8e8e8" />
<path d="M259.7 158.7 L265.4 155.2 L259.1 157.3Z" fill="#e8e8e8" />
<path d="M261.0 162.1 L266.6 159.8 L260.6 160.7Z" fill="#e8e8e8" />
<path d="M261.5 165.3 L266.4 164.2 L261.3 163.9Z" fill="#e8e8e8" />
<g filter="url(#soft2)" fill="none" stroke-linecap="round" stroke-linejoin="round">
<path d="M200.6 192 L198.4 205 L200.6 215 L197.4 222" stroke="#8c8c8c" stroke-width="2.4" opacity="0.5"/>
<path d="M231.6 202 L232.6 215 L235.6 226" stroke="#8c8c8c" stroke-width="2.4" opacity="0.5"/>
<path d="M237 184 L233 196" stroke="#8c8c8c" stroke-width="2.4" opacity="0.45"/>
<path d="M198 180 L200 190" stroke="#8c8c8c" stroke-width="2.4" opacity="0.45"/>
<path d="M209 262 L206.6 276 L204 290" stroke="#8c8c8c" stroke-width="2.2" opacity="0.45"/>
<path d="M189.6 262 L188.4 276 L187 290" stroke="#8c8c8c" stroke-width="1.6" opacity="0.35"/>
<path d="M226 262 L229.6 276 L232.6 290" stroke="#8c8c8c" stroke-width="2.2" opacity="0.45"/>
<path d="M244 262 L245.6 278 L247.6 290" stroke="#8c8c8c" stroke-width="1.6" opacity="0.35"/>
<path d="M202 310 L201.6 330 L200.6 346" stroke="#8c8c8c" stroke-width="2" opacity="0.4"/>
<path d="M236 310 L236.6 330 L236.6 346" stroke="#8c8c8c" stroke-width="2" opacity="0.4"/>
<path d="M189 200 L187 210 L182 218" stroke="#8c8c8c" stroke-width="2" opacity="0.45"/>
<path d="M245 194 L249 206 L251 216" stroke="#8c8c8c" stroke-width="2" opacity="0.45"/>
<path d="M214 247 L217 251 L221 247" stroke="#7a7a7a" stroke-width="2.4" opacity="0.5"/>
<path d="M185 153 L180 158 L177.4 166" stroke="#ffffff" stroke-width="1.6" opacity="0.9"/>
<path d="M248 151.6 L255 155 L259.6 162" stroke="#ffffff" stroke-width="1.6" opacity="0.9"/>
<path d="M193 240 L196 252 L194 264" stroke="#ffffff" stroke-width="2.4" opacity="0.8"/>
<path d="M236 240 L240 254 L242 266" stroke="#ffffff" stroke-width="2.4" opacity="0.7"/>
<path d="M192 300 L193 320 L193 340" stroke="#ffffff" stroke-width="2.4" opacity="0.8"/>
<path d="M242 300 L244 320 L244.6 340" stroke="#ffffff" stroke-width="2.4" opacity="0.8"/>
</g>
</g><g filter="url(#soft)">
<path d="M204.6 146.4 L206.8 142.2 L211 142.8 L217 147.4 L223 143 L228 141.6 L230.6 143.4 L233.6 148 L234.4 150.6 L228 152.6 L217 154.8 L207 152.8 L203.4 150.6Z" fill="#d0dbf9" />
<path d="M209 146.4 L217 150.4 L226 146.4 L223 151.6 L212 151.6Z" fill="#bcc8f3" opacity=".8"/>
</g><g filter="url(#sculpt)">
<path d="M217 119.6 C224 119.6 228.6 124.5 228.4 131 C228.2 136 226.4 140 223.4 143 L217.4 146.4 L211 143 C207.6 140 205.6 136 205.6 131 C205.6 124.5 210 119.6 217 119.6Z" fill="url(#headg)"/>
<g filter="url(#soft)">
<g fill="#747474" opacity=".75"><path d="M210 127.4l4.6-1.4l1.6 2.4l-3.4 2.2l-2.8-.8z"/><path d="M219.6 126.6l4.8 .4l.6 2.6l-3.6 1.2l-2.2-1.8z"/><path d="M213.6 133l2.4 .6l-.6 4l-2.6-1z"/><path d="M220 133.4l2.6-.6l.8 3.6l-2.8 1z"/><path d="M208 131l1.6 .6l.4 5l-1.6-1.6z"/><path d="M226.6 130.6l-1.6 .8l-.2 5l1.6-1.8z"/><path d="M215.6 138.6l4.4 0l-.6 1.4l-3.2 0z"/></g>
<g fill="#f4f4f4" opacity=".92"><path d="M213 121.4l6-.8l3 2l-2 2.4l-6 .4l-2.4-1.6z"/><path d="M216.8 129l2 .4l.6 5l-2.4 .6l-.8-4z"/><path d="M214.4 141.4l6.4 0l-1 2.8l-2.6 1.4l-2.4-1.4z"/><path d="M209.6 137l2 1.4l-.2 2.6l-1.6-1.2z"/><path d="M225.6 137.4l-2 1.4l.4 2.4l1.6-1.4z"/></g>
</g>
<g stroke="#f6f6f6" stroke-width=".8" stroke-linecap="round"><path d="M219.6 126.6l11.8-3.6M222 128.8l10.4-1.2M223 124l5-3M208 127.6l-3.6-1.6"/></g>
<g stroke="#666" stroke-width=".6" stroke-linecap="round" opacity=".7"><path d="M216 126.4l5-2.2M212.4 124.6l2.4 1"/></g>
</g><g filter="url(#soft)">
<path d="M26.8 376.7 L120.1 279.1 L131 289 L56.9 368.9Z" fill="#fbfbfb" />
<path d="M26.8 376.7 L56.9 368.9 L131 289 L130.2 288.4 L56.4 367.6 L30.4 375Z" fill="#d8d8d8" />
<g fill="none" stroke="#8e8e8e" stroke-width=".45" transform="translate(110.9,299.5) rotate(-42)"><rect x="-13.5" y="-.9" width="27" height="1.8"/><rect x="-12.6" y="-1.1" width="2.4" height="2.2" fill="#e8e8e8"/><rect x="9.8" y="-1.1" width="2.4" height="2.2" fill="#e8e8e8"/></g>
<path d="M90.2 334.8 L94 334.2 L103.3 349.4 L113.5 359.5 L119 362.4 L123.6 365.4 L123 368.4 L112 366.4 L100.4 363 L96 356Z" fill="#acd9a0" stroke="#c9d531" stroke-width=".8"/>
<path d="M92 337 L97 351 L103 359 L112 362.8 L104 356 L98 346Z" fill="#84c089" opacity=".7"/>
<path d="M121 279 L124 277.8 L126 290 L124 300.5 L119.1 312 L118.7 330 L119.4 350 L123.6 372.6 L119.3 366.8 L115 352 L114.3 329.6 L114.9 318 L117.2 308.3 L121 300.5 L122 288.8Z" fill="#b6d97e" stroke="#c9d531" stroke-width=".7"/>
<path d="M124 300.5 L119.1 312 L118.7 330 L119.4 350 L123.6 372.6 L125.6 372.8 L124 350 L123.6 325 L125 306Z" fill="#77b884" />
<path d="M124 277.8 L129.8 282 L131.7 289.8 L133.7 300.5 L135 314 L135.9 337.7 L135.9 361 L134.7 369.7 L128 373.2 L124.4 372.6 L123.6 350 L123.6 325 L124.6 306 L126 290Z" fill="#a2d9a6" stroke="#c9d531" stroke-width=".7"/>
<path d="M130 296 L131.8 320 L132.4 350 L131.8 368" fill="none" stroke="#c4ebc4" stroke-width="1.6" stroke-linecap="round" stroke-linejoin="round" opacity=".7"/>
<path d="M127 302 L127.2 330 L127.4 364" fill="none" stroke="#8ccb98" stroke-width="1.2" stroke-linecap="round" stroke-linejoin="round" opacity=".6"/>
</g>
</g>
<rect x="18.6" y="43.8" width="8.6" height="8.8" fill="#1d1d1f" stroke="#3e3e40" stroke-width=".6"/>
<rect x="18.6" y="55" width="8.6" height="8.8" fill="#1d1d1f" stroke="#3e3e40" stroke-width=".6"/>
<rect x="18.6" y="66.2" width="8.6" height="8.8" fill="#1d1d1f" stroke="#3e3e40" stroke-width=".6"/>
<rect x="18.6" y="77.4" width="8.6" height="8.8" fill="#1d1d1f" stroke="#3e3e40" stroke-width=".6"/>
<path transform="translate(22.9,48.4) scale(1.0)" d="M-1.4 -3 L-3.8 -1.6 L-3 0 L-2 -0.5 L-2 3 L2 3 L2 -0.5 L3 0 L3.8 -1.6 L1.4 -3 Q0 -2 -1.4 -3Z" fill="#f2f2f2"/>
<circle cx="22.9" cy="58" r="1.6" fill="#f0f0f0"/><path d="M19.8 63.2q0-3.2 3.1-3.2q3.1 0 3.1 3.2z" fill="#f0f0f0"/>
<path d="M20 68.6l1.4-.6q1.5 1 3 0l1.6 .6l-.6 5.4h-4.6z" fill="#2f8fe0"/><path d="M21 69.4l3.8 .2l-.3 2.4l-3-.2z" fill="#7cc4f6"/>
<ellipse cx="22.9" cy="81.4" rx="2.5" ry="3" fill="#f6c79a"/><path d="M20.6 85.6q2.3-1.6 4.6 0v.4h-4.6z" fill="#e8a872"/>
<defs><pattern id="grid" x="333.5" y="39.3" width="4.45" height="4.45" patternUnits="userSpaceOnUse"><path d="M4.2 0V4.45M0 4.2H4.45" stroke="#c8c8c8" stroke-width=".5" fill="none"/></pattern><clipPath id="c2d"><rect x="333.5" y="39.3" width="236" height="373"/></clipPath></defs>
<rect x="333.5" y="39.3" width="236" height="372.7" fill="#cecece" />
<rect x="333.5" y="39.3" width="236" height="372.7" fill="url(#grid)" />
<rect x="333.5" y="39.3" width="0.9" height="372.7" fill="#e6e6e6" />
<rect x="333.5" y="39.3" width="236" height="0.8" fill="#dcdcdc" />
<rect x="568.2" y="39.3" width="1.4" height="372.7" fill="#dadada" />
<g clip-path="url(#c2d)">
<g filter="url(#soft2)"><ellipse cx="457.6" cy="200.4" rx="11.2" ry="10.8" fill="#c1c1c1"/><ellipse cx="458" cy="201" rx="5.6" ry="5.8" fill="#cbcbcb"/><path d="M458 190v8" stroke="#cbcbcb" stroke-width="2"/><path d="M474.6 190 l6 -2 l2.6 10 l-3 11 l-5.6 1z" fill="#d8d8d8"/><path d="M371.6 328 L383.6 316.4 L390 320 L381 328Z" fill="#bdbdbd"/></g>
<rect x="457.8" y="39.3" width="0.8" height="372.7" fill="#9f9f9f" />
<rect x="333.5" y="328.6" width="236" height="0.7" fill="#e2e2e2" />
<path d="M359.2 212.1 L359.5 239 C359.8 252 361.2 264 367 279.8 C373 296 386 312 401 322.2 C416 330.4 436 333.2 458.2 333.4 C480.4 333.2 500.4 330.4 515.4 322.2 C530.4 312 543.4 296 549.4 279.8 C555.2 264 556.6 252 556.9 239 L557.2 212.1 Z" fill="#73b9b8" stroke="#4e6c6e" stroke-width=".6"/>
<rect x="395.2" y="160.4" width="24.2" height="12.4" fill="#73b9b8" stroke="#3f6a6c" stroke-width=".8"/>
<rect x="402.4" y="177.6" width="24.2" height="12" fill="#73b9b8" stroke="#3f6a6c" stroke-width=".8"/>
<g stroke="#384c50" stroke-width=".6"><path d="M418.2 161.8h3.2M419.6 160v4M400.6 179.4h3.2M402 177.6v4"/></g>
<g fill="#57c8dc"><rect x="394.6" y="159.8" width="1.2" height="1.2"/><rect x="418.8" y="159.8" width="1.2" height="1.2"/><rect x="394.6" y="172.2" width="1.2" height="1.2"/><rect x="418.8" y="172.2" width="1.2" height="1.2"/><rect x="401.8" y="177" width="1.2" height="1.2"/><rect x="426" y="177" width="1.2" height="1.2"/><rect x="401.8" y="189" width="1.2" height="1.2"/><rect x="426" y="189" width="1.2" height="1.2"/></g>
<rect x="483.8" y="153.8" width="13.6" height="118.2" fill="#73b9b8" stroke="#f0f23c" stroke-width="1.3"/>
<path d="M485 155.4V271" stroke="#d4ee8a" stroke-width=".8" opacity=".8"/>
<g fill="none" stroke="#6a6a6a" stroke-width=".6" stroke-dasharray="1 1.2"><rect x="475.6" y="146.4" width="29.8" height="133.4"/><path d="M490.4 146.4V135"/></g>
<g fill="#d8d8d8" stroke="#666" stroke-width=".5"><circle cx="475.6" cy="146.4" r="1"/><circle cx="490.4" cy="146.4" r="1"/><circle cx="505.4" cy="146.4" r="1"/><circle cx="490.4" cy="134.4" r="1"/><circle cx="475.6" cy="279.8" r=".9"/><circle cx="490.4" cy="279.8" r=".9"/><circle cx="505.4" cy="279.8" r=".9"/><circle cx="475.6" cy="212.6" r=".9"/><circle cx="505.4" cy="212.6" r=".9"/></g>
<rect x="484.4" y="152.8" width="2" height="2" fill="#1826c8"/>
<g fill="#111"><circle cx="461.2" cy="213" r="1"/><circle cx="496.4" cy="212.6" r="1"/><circle cx="359.6" cy="212.2" r=".8"/><circle cx="556.8" cy="212.2" r=".8"/><circle cx="458.2" cy="333" r=".7"/></g>
<g stroke="#555" stroke-width=".5" fill="#e8e8e8"><path d="M490.4 210.4v4.6M488.1 212.7h4.6" /><circle cx="490.4" cy="212.7" r="1.2"/></g>
</g>
<rect x="569.6" y="13" width="2.6" height="399" fill="#161616" />
<rect x="572.2" y="13" width="160" height="399" fill="#232323" />
<rect x="572.2" y="13" width="160" height="7.2" fill="#1c1c1c" />
<text x="650.6" y="18.6" font-size="4.85" fill="#9a9a9a" font-weight="normal" text-anchor="middle" textLength="28.6" lengthAdjust="spacingAndGlyphs"  stroke="#9a9a9a" stroke-width=".1">Object Browser</text>
<path d="M573.6 16.6h2.2v-1.4l2 1.9l-2 1.9v-1.4h-2.2z" fill="#d0d0d0"/>
<rect x="572.2" y="20.2" width="160" height="7.2" fill="#1e1e1e" />
<rect x="575" y="21" width="19" height="6.2" fill="#252525" />
<rect x="594.4" y="20.8" width="13.4" height="6.6" fill="#2f2f2f" />
<rect x="608.6" y="21" width="21" height="6.2" fill="#252525" />
<rect x="630.4" y="21" width="28" height="6.2" fill="#252525" />
<rect x="658.6" y="26.6" width="71.4" height="0.8" fill="#4a4a4a" />
<text x="577.4" y="25.8" font-size="4.85" fill="#4c4c4c" font-weight="normal" text-anchor="start" textLength="13.6" lengthAdjust="spacingAndGlyphs"  stroke="#4c4c4c" stroke-width=".1">Scene</text>
<text x="595.6" y="25.8" font-size="4.85" fill="#e6e6e6" font-weight="normal" text-anchor="start" textLength="10.8" lengthAdjust="spacingAndGlyphs"  stroke="#e6e6e6" stroke-width=".1">Fabric</text>
<text x="613.8" y="25.8" font-size="4.85" fill="#4c4c4c" font-weight="normal" text-anchor="start" textLength="12.6" lengthAdjust="spacingAndGlyphs"  stroke="#4c4c4c" stroke-width=".1">Button</text>
<text x="634.4" y="25.8" font-size="4.85" fill="#4c4c4c" font-weight="normal" text-anchor="start" textLength="20.6" lengthAdjust="spacingAndGlyphs"  stroke="#4c4c4c" stroke-width=".1">Buttonhole</text>
<rect x="664.4" y="33.4" width="16" height="7.2" fill="#303030" />
<rect x="682.6" y="33.4" width="20.4" height="7.2" fill="#2b2b2b" />
<rect x="704" y="33.4" width="24.4" height="7.2" fill="#303030" />
<text x="667.2" y="38.8" font-size="5.4" fill="#bdbdbd" font-weight="normal" text-anchor="start"  stroke="#bdbdbd" stroke-width=".1">+</text>
<text x="671.6" y="38.6" font-size="4.85" fill="#bdbdbd" font-weight="normal" text-anchor="start" textLength="7.6" lengthAdjust="spacingAndGlyphs"  stroke="#bdbdbd" stroke-width=".1">Add</text>
<rect x="685.4" y="35.4" width="2.6" height="3" fill="none" stroke="#444" stroke-width=".6"/>
<text x="690.2" y="38.6" font-size="4.85" fill="#444" font-weight="normal" text-anchor="start" textLength="9.6" lengthAdjust="spacingAndGlyphs"  stroke="#444" stroke-width=".1">Copy</text>
<path d="M707.4 36.6l1.2 1.4l2.4-2.8" stroke="#aaa" stroke-width=".7" fill="none"/>
<text x="713.2" y="38.6" font-size="4.85" fill="#bdbdbd" font-weight="normal" text-anchor="start" textLength="12.8" lengthAdjust="spacingAndGlyphs"  stroke="#bdbdbd" stroke-width=".1">Assign</text>
<rect x="572.2" y="43.4" width="157.6" height="0.6" fill="#1a1a1a" />
<rect x="590.4" y="45.8" width="14.4" height="14.3" fill="#7fc9c6" />
<text x="608.2" y="54.8" font-size="4.85" fill="#eeb534" font-weight="normal" text-anchor="start" textLength="25.6" lengthAdjust="spacingAndGlyphs"  stroke="#eeb534" stroke-width=".1">Default Fabric</text>
<path d="M717 51.199999999999996v3.2h2.6v-3.2M718.3 51.199999999999996v2" stroke="#b5b5b5" stroke-width=".8" fill="none"/>
<rect x="586" y="61.199999999999996" width="142" height="0.5" fill="#1e1e1e" />
<rect x="590.4" y="62.65" width="14.4" height="14.3" fill="#2e4168" />
<rect x="590.4" y="62.65" width="14.4" height="14.3" fill="#3a4d74" opacity=".35"/>
<text x="608.2" y="71.65" font-size="4.85" fill="#444" font-weight="normal" text-anchor="start" textLength="11" lengthAdjust="spacingAndGlyphs"  stroke="#444" stroke-width=".1">Zipper</text>
<path d="M717 68.05v3.2h2.6v-3.2M718.3 68.05v2" stroke="#b5b5b5" stroke-width=".8" fill="none"/>
<rect x="709.8" y="67.65" width="2.6" height="3.8" fill="none" stroke="#b5b5b5" stroke-width=".7"/><rect x="710.5" y="68.45" width="1.2" height="1.6" fill="#b5b5b5"/>
<rect x="586" y="78.05" width="142" height="0.5" fill="#1e1e1e" />
<rect x="590.4" y="79.5" width="14.4" height="14.3" fill="#2e4168" />
<rect x="590.4" y="79.5" width="14.4" height="14.3" fill="#3a4d74" opacity=".35"/>
<text x="608.2" y="88.5" font-size="4.85" fill="#444" font-weight="normal" text-anchor="start" textLength="19.6" lengthAdjust="spacingAndGlyphs"  stroke="#444" stroke-width=".1">FrontBack</text>
<path d="M717 84.9v3.2h2.6v-3.2M718.3 84.9v2" stroke="#b5b5b5" stroke-width=".8" fill="none"/>
<rect x="709.8" y="84.5" width="2.6" height="3.8" fill="none" stroke="#b5b5b5" stroke-width=".7"/><rect x="710.5" y="85.3" width="1.2" height="1.6" fill="#b5b5b5"/>
<rect x="586" y="94.9" width="142" height="0.5" fill="#1e1e1e" />
<rect x="590.4" y="96.35" width="14.4" height="14.3" fill="#2e4168" />
<rect x="590.4" y="96.35" width="14.4" height="14.3" fill="#3a4d74" opacity=".35"/>
<text x="608.2" y="105.35" font-size="4.85" fill="#444" font-weight="normal" text-anchor="start" textLength="18" lengthAdjust="spacingAndGlyphs"  stroke="#444" stroke-width=".1">WaistBelt</text>
<path d="M717 101.75v3.2h2.6v-3.2M718.3 101.75v2" stroke="#b5b5b5" stroke-width=".8" fill="none"/>
<rect x="709.8" y="101.35" width="2.6" height="3.8" fill="none" stroke="#b5b5b5" stroke-width=".7"/><rect x="710.5" y="102.14999999999999" width="1.2" height="1.6" fill="#b5b5b5"/>
<rect x="586" y="111.75" width="142" height="0.5" fill="#1e1e1e" />
<rect x="590.4" y="113.2" width="14.4" height="14.3" fill="#2e4168" />
<rect x="590.4" y="113.2" width="14.4" height="14.3" fill="#3a4d74" opacity=".35"/>
<text x="608.2" y="122.2" font-size="4.85" fill="#444" font-weight="normal" text-anchor="start" textLength="12" lengthAdjust="spacingAndGlyphs"  stroke="#444" stroke-width=".1">Pocket</text>
<path d="M717 118.60000000000001v3.2h2.6v-3.2M718.3 118.60000000000001v2" stroke="#b5b5b5" stroke-width=".8" fill="none"/>
<rect x="709.8" y="118.2" width="2.6" height="3.8" fill="none" stroke="#b5b5b5" stroke-width=".7"/><rect x="710.5" y="119.0" width="1.2" height="1.6" fill="#b5b5b5"/>
<rect x="586" y="128.6" width="142" height="0.5" fill="#1e1e1e" />
<rect x="590.4" y="130.05" width="14.4" height="14.3" fill="#d9d9d9" />
<text x="608.2" y="139.05" font-size="4.85" fill="#444" font-weight="normal" text-anchor="start" textLength="9.4" lengthAdjust="spacingAndGlyphs"  stroke="#444" stroke-width=".1">Skin1</text>
<path d="M717 135.45000000000002v3.2h2.6v-3.2M718.3 135.45000000000002v2" stroke="#b5b5b5" stroke-width=".8" fill="none"/>
<rect x="709.8" y="135.05" width="2.6" height="3.8" fill="none" stroke="#b5b5b5" stroke-width=".7"/><rect x="710.5" y="135.85000000000002" width="1.2" height="1.6" fill="#b5b5b5"/>
<rect x="586" y="145.45000000000002" width="142" height="0.5" fill="#1e1e1e" />
<path d="M579.6 52.8l1.4 1.6l3-3" stroke="#f2b52a" stroke-width="1.2" fill="none"/>
<rect x="572.2" y="186.8" width="160" height="1.6" fill="#181818" />
<rect x="572.2" y="188.4" width="160" height="8.6" fill="#1c1c1c" />
<text x="650.4" y="195" font-size="4.85" fill="#a6a6a6" font-weight="normal" text-anchor="middle" textLength="28.2" lengthAdjust="spacingAndGlyphs"  stroke="#a6a6a6" stroke-width=".1">Property Editor</text>
<path d="M573.6 192.6h2.2v-1.4l2 1.9l-2 1.9v-1.4h-2.2z" fill="#d0d0d0"/>
<rect x="572.2" y="197" width="160" height="215" fill="#262626" />
<text x="582.8" y="204.8" font-size="4.85" fill="#bdbdbd" font-weight="normal" text-anchor="start" textLength="10" lengthAdjust="spacingAndGlyphs"  stroke="#bdbdbd" stroke-width=".1">Name</text>
<text x="680.8" y="204.8" font-size="4.85" fill="#a8a8a8" font-weight="normal" text-anchor="start" textLength="30.6" lengthAdjust="spacingAndGlyphs"  stroke="#a8a8a8" stroke-width=".1">Pattern2D_8352</text>
<rect x="576" y="208.4" width="152" height="0.5" fill="#1c1c1c" />
<path d="M577.2 211.89999999999998h3.6l-1.8 2.6z" fill="#e6e6e6"/>
<text x="582.8" y="215.2" font-size="4.85" fill="#eeb534" font-weight="normal" text-anchor="start" textLength="23.8" lengthAdjust="spacingAndGlyphs"  stroke="#eeb534" stroke-width=".1">Selected Line</text>
<text x="589.8" y="226" font-size="4.85" fill="#a9a9a9" font-weight="normal" text-anchor="start" textLength="26.4" lengthAdjust="spacingAndGlyphs"  stroke="#a9a9a9" stroke-width=".1">2D Line Length</text>
<text x="679" y="226" font-size="4.85" fill="#a9a9a9" font-weight="normal" text-anchor="start" textLength="19.6" lengthAdjust="spacingAndGlyphs"  stroke="#a9a9a9" stroke-width=".1">3631.8mm</text>
<text x="589.8" y="236.7" font-size="4.85" fill="#a9a9a9" font-weight="normal" text-anchor="start" textLength="26.4" lengthAdjust="spacingAndGlyphs"  stroke="#a9a9a9" stroke-width=".1">3D Line Length</text>
<text x="679" y="236.7" font-size="4.85" fill="#a9a9a9" font-weight="normal" text-anchor="start" textLength="19.6" lengthAdjust="spacingAndGlyphs"  stroke="#a9a9a9" stroke-width=".1">3681.2mm</text>
<text x="589.8" y="247.3" font-size="4.85" fill="#a9a9a9" font-weight="normal" text-anchor="start" textLength="11.6" lengthAdjust="spacingAndGlyphs"  stroke="#a9a9a9" stroke-width=".1">Elastic</text>
<rect x="678.8" y="243.60000000000002" width="3.6" height="3.8" fill="#858585"/><path d="M678.8 245.5h3.6M680.6 243.60000000000002v3.8" stroke="#4a4a4a" stroke-width=".35"/>
<text x="685.4" y="247.3" font-size="4.85" fill="#bdbdbd" font-weight="normal" text-anchor="start" textLength="6.2" lengthAdjust="spacingAndGlyphs"  stroke="#bdbdbd" stroke-width=".1">Off</text>
<text x="589.8" y="258" font-size="4.85" fill="#a9a9a9" font-weight="normal" text-anchor="start" textLength="22.8" lengthAdjust="spacingAndGlyphs"  stroke="#a9a9a9" stroke-width=".1">Seam Taping</text>
<rect x="678.8" y="254.3" width="3.6" height="3.8" fill="#858585"/><path d="M678.8 256.2h3.6M680.6 254.3v3.8" stroke="#4a4a4a" stroke-width=".35"/>
<text x="685.4" y="258" font-size="4.85" fill="#bdbdbd" font-weight="normal" text-anchor="start" textLength="6.2" lengthAdjust="spacingAndGlyphs"  stroke="#bdbdbd" stroke-width=".1">Off</text>
<text x="589.8" y="268.6" font-size="4.85" fill="#a9a9a9" font-weight="normal" text-anchor="start" textLength="41.2" lengthAdjust="spacingAndGlyphs"  stroke="#a9a9a9" stroke-width=".1">Curved Side Geometry</text>
<rect x="678.8" y="264.90000000000003" width="3.6" height="3.8" fill="#858585"/><path d="M678.8 266.8h3.6M680.6 264.90000000000003v3.8" stroke="#4a4a4a" stroke-width=".35"/>
<text x="685.4" y="268.6" font-size="4.85" fill="#bdbdbd" font-weight="normal" text-anchor="start" textLength="6.2" lengthAdjust="spacingAndGlyphs"  stroke="#bdbdbd" stroke-width=".1">Off</text>
<path d="M577.2 276.09999999999997h3.6l-1.8 2.6z" fill="#e6e6e6"/>
<text x="582.8" y="279.4" font-size="4.85" fill="#eeb534" font-weight="normal" text-anchor="start" textLength="38.6" lengthAdjust="spacingAndGlyphs"  stroke="#eeb534" stroke-width=".1">Simulation Properties</text>
<text x="589.8" y="290" font-size="4.85" fill="#a9a9a9" font-weight="normal" text-anchor="start" textLength="40.4" lengthAdjust="spacingAndGlyphs"  stroke="#a9a9a9" stroke-width=".1">Particle Distance (mm)</text>
<text x="679" y="290" font-size="4.85" fill="#a9a9a9" font-weight="normal" text-anchor="start" textLength="8" lengthAdjust="spacingAndGlyphs"  stroke="#a9a9a9" stroke-width=".1">10.0</text>
<path d="M711.8 289.6l3-3" stroke="#b0b0b0" stroke-width="1"/><circle cx="715" cy="286.4" r=".7" fill="#d0d0d0"/>
<text x="589.8" y="300.7" font-size="4.85" fill="#a9a9a9" font-weight="normal" text-anchor="start" textLength="10.4" lengthAdjust="spacingAndGlyphs"  stroke="#a9a9a9" stroke-width=".1">Layer</text>
<text x="679" y="300.7" font-size="4.85" fill="#a9a9a9" font-weight="normal" text-anchor="start" textLength="2.4" lengthAdjust="spacingAndGlyphs"  stroke="#a9a9a9" stroke-width=".1">0</text>
<path d="M711.8 300.3l3-3" stroke="#b0b0b0" stroke-width="1"/><circle cx="715" cy="297.09999999999997" r=".7" fill="#d0d0d0"/>
<text x="589.8" y="311.4" font-size="4.85" fill="#a9a9a9" font-weight="normal" text-anchor="start" textLength="35" lengthAdjust="spacingAndGlyphs"  stroke="#a9a9a9" stroke-width=".1">Shrinkage Weft (%)</text>
<text x="679" y="311.4" font-size="4.85" fill="#a9a9a9" font-weight="normal" text-anchor="start" textLength="12.6" lengthAdjust="spacingAndGlyphs"  stroke="#a9a9a9" stroke-width=".1">100.00</text>
<path d="M711.8 311.0l3-3" stroke="#b0b0b0" stroke-width="1"/><circle cx="715" cy="307.79999999999995" r=".7" fill="#d0d0d0"/>
<text x="589.8" y="322.1" font-size="4.85" fill="#a9a9a9" font-weight="normal" text-anchor="start" textLength="35.6" lengthAdjust="spacingAndGlyphs"  stroke="#a9a9a9" stroke-width=".1">Shrinkage Warp (%)</text>
<text x="679" y="322.1" font-size="4.85" fill="#a9a9a9" font-weight="normal" text-anchor="start" textLength="12.6" lengthAdjust="spacingAndGlyphs"  stroke="#a9a9a9" stroke-width=".1">100.00</text>
<path d="M711.8 321.70000000000005l3-3" stroke="#b0b0b0" stroke-width="1"/><circle cx="715" cy="318.5" r=".7" fill="#d0d0d0"/>
<text x="589.8" y="332.8" font-size="4.85" fill="#a9a9a9" font-weight="normal" text-anchor="start" textLength="56.6" lengthAdjust="spacingAndGlyphs"  stroke="#a9a9a9" stroke-width=".1">Add'l Thickness - Collision (mm)</text>
<text x="679" y="332.8" font-size="4.85" fill="#a9a9a9" font-weight="normal" text-anchor="start" textLength="6" lengthAdjust="spacingAndGlyphs"  stroke="#a9a9a9" stroke-width=".1">2.5</text>
<path d="M711.8 332.40000000000003l3-3" stroke="#b0b0b0" stroke-width="1"/><circle cx="715" cy="329.2" r=".7" fill="#d0d0d0"/>
<text x="589.8" y="343.5" font-size="4.85" fill="#a9a9a9" font-weight="normal" text-anchor="start" textLength="60.4" lengthAdjust="spacingAndGlyphs"  stroke="#a9a9a9" stroke-width=".1">Add'l Thickness - Rendering (mm)</text>
<text x="679" y="343.5" font-size="4.85" fill="#a9a9a9" font-weight="normal" text-anchor="start" textLength="6" lengthAdjust="spacingAndGlyphs"  stroke="#a9a9a9" stroke-width=".1">0.0</text>
<path d="M711.8 343.1l3-3" stroke="#b0b0b0" stroke-width="1"/><circle cx="715" cy="339.9" r=".7" fill="#d0d0d0"/>
<path d="M585.8 353.6l2.6 1.9l-2.6 1.9z" fill="#e6e6e6"/>
<text x="589.8" y="357.4" font-size="4.85" fill="#a9a9a9" font-weight="normal" text-anchor="start" textLength="15.4" lengthAdjust="spacingAndGlyphs"  stroke="#a9a9a9" stroke-width=".1">Pressure</text>
<text x="679" y="353.8" font-size="4.85" fill="#a9a9a9" font-weight="normal" text-anchor="start" textLength="2.4" lengthAdjust="spacingAndGlyphs"  stroke="#a9a9a9" stroke-width=".1">0</text>
<path d="M711.8 353.4l3-3" stroke="#b0b0b0" stroke-width="1"/><circle cx="715" cy="350.2" r=".7" fill="#d0d0d0"/>
<rect x="678.2" y="360.2" width="38" height="0.7" fill="#6a6a6a" />
<rect x="678.2" y="360.1" width="19.4" height="0.9" fill="#c8c8c8" />
<ellipse cx="697.6" cy="360.5" rx=".9" ry="1.5" fill="#e4e4e4"/>
<path d="M577.2 368.09999999999997h3.6l-1.8 2.6z" fill="#e6e6e6"/>
<text x="582.8" y="371.4" font-size="4.85" fill="#eeb534" font-weight="normal" text-anchor="start" textLength="10.6" lengthAdjust="spacingAndGlyphs"  stroke="#eeb534" stroke-width=".1">Fabric</text>
<text x="589.8" y="381.8" font-size="4.85" fill="#a9a9a9" font-weight="normal" text-anchor="start" textLength="10.6" lengthAdjust="spacingAndGlyphs"  stroke="#a9a9a9" stroke-width=".1">Fabric</text>
<rect x="681" y="377" width="5.6" height="6.2" fill="#7fc9c6" />
<text x="689" y="381.8" font-size="4.85" fill="#a9a9a9" font-weight="normal" text-anchor="start" textLength="25.4" lengthAdjust="spacingAndGlyphs"  stroke="#a9a9a9" stroke-width=".1">Default Fabric</text>
<text x="589.8" y="391.6" font-size="4.85" fill="#a9a9a9" font-weight="normal" text-anchor="start" textLength="26.4" lengthAdjust="spacingAndGlyphs"  stroke="#a9a9a9" stroke-width=".1">Grain Direction</text>
<path d="M680 390.4l2-2.4" stroke="#aaa" stroke-width=".8"/>
<path d="M711.8 391.4l3-3" stroke="#b0b0b0" stroke-width="1"/>
<path d="M578 398.4l2.6 1.8l-2.6 1.8z" fill="#e6e6e6"/>
<text x="582.8" y="402.2" font-size="4.85" fill="#eeb534" font-weight="normal" text-anchor="start" textLength="19.6" lengthAdjust="spacingAndGlyphs"  stroke="#eeb534" stroke-width=".1">Bond/Skive</text>
<text x="582.8" y="412.6" font-size="4.85" fill="#a9a9a9" font-weight="normal" text-anchor="start" textLength="13.2" lengthAdjust="spacingAndGlyphs"  stroke="#a9a9a9" stroke-width=".1">Solidify</text>
<rect x="678.8" y="408.90000000000003" width="3.6" height="3.8" fill="#858585"/><path d="M678.8 410.8h3.6M680.6 408.90000000000003v3.8" stroke="#4a4a4a" stroke-width=".35"/>
<text x="685.4" y="412.6" font-size="4.85" fill="#bdbdbd" font-weight="normal" text-anchor="start" textLength="6.2" lengthAdjust="spacingAndGlyphs"  stroke="#bdbdbd" stroke-width=".1">Off</text>
<rect x="723.4" y="197" width="6.1" height="215" fill="#2a2a2a" />
<rect x="724" y="199" width="4.8" height="5.6" fill="#303030" />
<rect x="724.2" y="401.4" width="5.3" height="10.6" fill="#3c3c3c" />
<rect x="729.5" y="13" width="2.5" height="399" fill="#111111" />
<text x="552.2" y="7.6" font-size="4.4" fill="#444" font-weight="normal" text-anchor="start" textLength="11.2" lengthAdjust="spacingAndGlyphs"  stroke="#444" stroke-width=".1">Hello,</text>
<text x="564.6" y="7.8" font-size="5.2" fill="#dfa233" font-weight="bold" text-anchor="start" textLength="27.8" lengthAdjust="spacingAndGlyphs"  stroke="#dfa233" stroke-width=".1">darth_matte</text>
<path d="M600.2 5.4h1.6l2.2-1.9v6.2l-2.2-1.9h-1.6z" fill="#d6d6d6"/><path d="M605.2 4.8q1.2 1.7 0 3.6" stroke="#bbb" stroke-width=".6" fill="none"/>
<circle cx="618.8" cy="6.6" r="3.1" fill="#dadada"/>
<text x="618.8" y="8.5" font-size="5.2" fill="#2c2c2c" font-weight="bold" text-anchor="middle"  stroke="#2c2c2c" stroke-width=".1">?</text>
<path d="M631.6 4.6l1.2 .3l.9 3.3h3.4l1.2-3.6l1.2-.6" stroke="#d6d6d6" stroke-width=".9" fill="none"/><circle cx="634.4" cy="9.5" r=".7" fill="#d6d6d6"/><circle cx="636.8" cy="9.5" r=".7" fill="#d6d6d6"/><path d="M633.6 6.6h3.6" stroke="#d6d6d6" stroke-width="1.4"/>
<rect x="641.6" y="0" width="52.4" height="12.4" fill="#1d1d1d" />
<path d="M645.6 3.4l2.2 1.6l2.2-1.6l-.5 1.9l-1.7 1.3l-1.7-1.3z M645.9 6.6l1.9 1.3l1.9-1.3v1.5l-1.9 1.5l-1.9-1.5z" fill="#f2b52a"/>
<text x="654.2" y="7.9" font-size="4.9" fill="#f0f0f0" font-weight="bold" text-anchor="start" textLength="22.8" lengthAdjust="spacingAndGlyphs"  stroke="#f0f0f0" stroke-width=".1">SIMULATION</text>
<path d="M688.2 5.2h3l-1.5 1.9z" fill="#e0e0e0"/>
<path d="M701.8 7h3" stroke="#8a8a8a" stroke-width=".8"/><rect x="710.6" y="5.6" width="2.8" height="2.6" fill="none" stroke="#777" stroke-width=".6"/><path d="M711.8 5.6v-1h2.8v2.6h-1.2" fill="none" stroke="#777" stroke-width=".6"/><path d="M719.6 4.8l3 3.2M722.6 4.8l-3 3.2" stroke="#7a7a7a" stroke-width=".8"/>
<g opacity=".46" fill="#a6a6a6" stroke="#a6a6a6" stroke-width=".45">
<text x="645.2" y="387.8" font-size="19" textLength="78.2" lengthAdjust="spacingAndGlyphs" fill="#a6a6a6">GNOMON</text>
<text x="636" y="401.3" font-size="14.3" textLength="87.4" lengthAdjust="spacingAndGlyphs" fill="#a6a6a6">WORKSHOP</text>
<text transform="translate(641.4,387.6) rotate(-90)" font-size="7.4" textLength="13.4" lengthAdjust="spacingAndGlyphs" fill="#a6a6a6">THE</text>
<g fill="none" stroke="#a6a6a6"><path d="M607.4 388.4 A11 9.6 0 1 0 630.6 388.4" stroke-width="3.4"/><path d="M606 388 A12.6 11.2 0 1 0 632 388" stroke-width="2.6" stroke-dasharray="3.2 3.4" transform="translate(0,0.6)"/></g>
<path d="M610.6 390.6 C614 393.4 622 393.6 627 390.4 C622 391.4 617.6 390.4 616.6 388 C618 383 622 377.4 626.4 373 C619.6 377 614.6 383 613.6 388.6Z" fill="#a6a6a6"/>
</g>
</svg>
</body></html>
